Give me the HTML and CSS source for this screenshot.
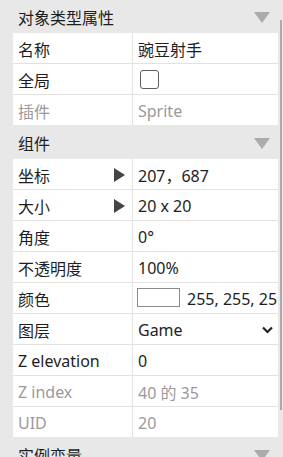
FILE: index.html
```html
<!DOCTYPE html>
<html lang="zh">
<head>
<meta charset="utf-8">
<link rel="stylesheet" href="styles.css">
</head>
<body>
<div class="panel">
  <div class="section-head first">
    <span>对象类型属性</span>
    <svg class="collapse" width="16" height="11" viewBox="0 0 16 11"><polygon points="0,0 16,0 8,11" fill="#ababab"/></svg>
  </div>
  <div class="rows">
    <div class="row"><div class="label">名称</div><div class="value">豌豆射手</div></div>
    <div class="row"><div class="label">全局</div><div class="value"><span class="checkbox"></span></div></div>
    <div class="row disabled"><div class="label">插件</div><div class="value">Sprite</div></div>
  </div>

  <div class="section-head">
    <span>组件</span>
    <svg class="collapse" width="16" height="11" viewBox="0 0 16 11"><polygon points="0,0 16,0 8,11" fill="#ababab"/></svg>
  </div>
  <div class="rows">
    <div class="row"><div class="label">坐标<svg class="expand" width="11" height="14" viewBox="0 0 11 14"><polygon points="0,0 11,7 0,14" fill="#444"/></svg></div><div class="value">207，687</div></div>
    <div class="row"><div class="label">大小<svg class="expand" width="11" height="14" viewBox="0 0 11 14"><polygon points="0,0 11,7 0,14" fill="#444"/></svg></div><div class="value">20 x 20</div></div>
    <div class="row"><div class="label">角度</div><div class="value">0°</div></div>
    <div class="row"><div class="label">不透明度</div><div class="value">100%</div></div>
    <div class="row"><div class="label">颜色</div><div class="value"><span class="swatch"></span><span class="nowrap">255, 255, 255</span></div></div>
    <div class="row"><div class="label">图层</div><div class="value select"><span>Game</span><svg class="chevron" width="11" height="8" viewBox="0 0 11 8"><polyline points="1,1.5 5.5,6 10,1.5" fill="none" stroke="#222" stroke-width="2.2"/></svg></div></div>
    <div class="row"><div class="label">Z elevation</div><div class="value">0</div></div>
    <div class="row disabled"><div class="label">Z index</div><div class="value">40 的 35</div></div>
    <div class="row disabled"><div class="label">UID</div><div class="value">20</div></div>
  </div>

  <div class="section-head">
    <span>实例变量</span>
    <svg class="collapse" width="16" height="11" viewBox="0 0 16 11"><polygon points="0,0 16,0 8,11" fill="#ababab"/></svg>
  </div>
</div>
<div class="scrollbar"></div>
</body>
</html>
```

FILE: styles.css
```css
html, body {
  margin: 0;
  padding: 0;
  background: #e8e8e8;
  overflow: hidden;
}

body {
  width: 283px;
  height: 457px;
  position: relative;
  font-family: "Noto Sans", "Noto Sans CJK SC", sans-serif;
  font-size: 16px;
  color: #1e1e1e;
}

.panel {
  width: 278px;
}

.section-head {
  height: 34px;
  box-sizing: border-box;
  padding: 2px 8px 0 18px;
  display: flex;
  align-items: center;
  justify-content: space-between;
  background: #e8e8e8;
}

.section-head.first {
  margin-top: -1px;
}

.rows {
  margin-left: 13px;
  background: #ffffff;
}

.row {
  display: grid;
  grid-template-columns: 120px 1fr;
  height: 31px;
  box-sizing: border-box;
  border-bottom: 1px solid #e2e2e2;
}

.row:last-child {
  border-bottom: none;
  height: 30px;
}

.label {
  display: flex;
  align-items: center;
  justify-content: space-between;
  padding: 1px 7px 0 5px;
  border-right: 1px solid #e2e2e2;
  white-space: nowrap;
}

.value {
  display: flex;
  align-items: center;
  padding: 1px 0 0 5px;
  overflow: hidden;
  white-space: nowrap;
}

.disabled .label,
.disabled .value {
  color: #9a9a9a;
}

.checkbox {
  display: block;
  width: 17px;
  height: 17px;
  margin-left: 2px;
  border: 1px solid #5e5e5e;
  border-radius: 3px;
  background: #fff;
}

.swatch {
  display: block;
  flex: none;
  width: 41px;
  height: 17px;
  margin: -2px 7px 0 -1px;
  border: 1px solid #8a8a8a;
  background: #fff;
}

.nowrap {
  white-space: nowrap;
}

.select {
  justify-content: space-between;
  padding-right: 5px;
}

.expand, .chevron, .collapse {
  display: block;
  flex: none;
}

.scrollbar {
  position: absolute;
  left: 280px;
  top: 20px;
  width: 2px;
  height: 390px;
  background: #ababab;
}
```
